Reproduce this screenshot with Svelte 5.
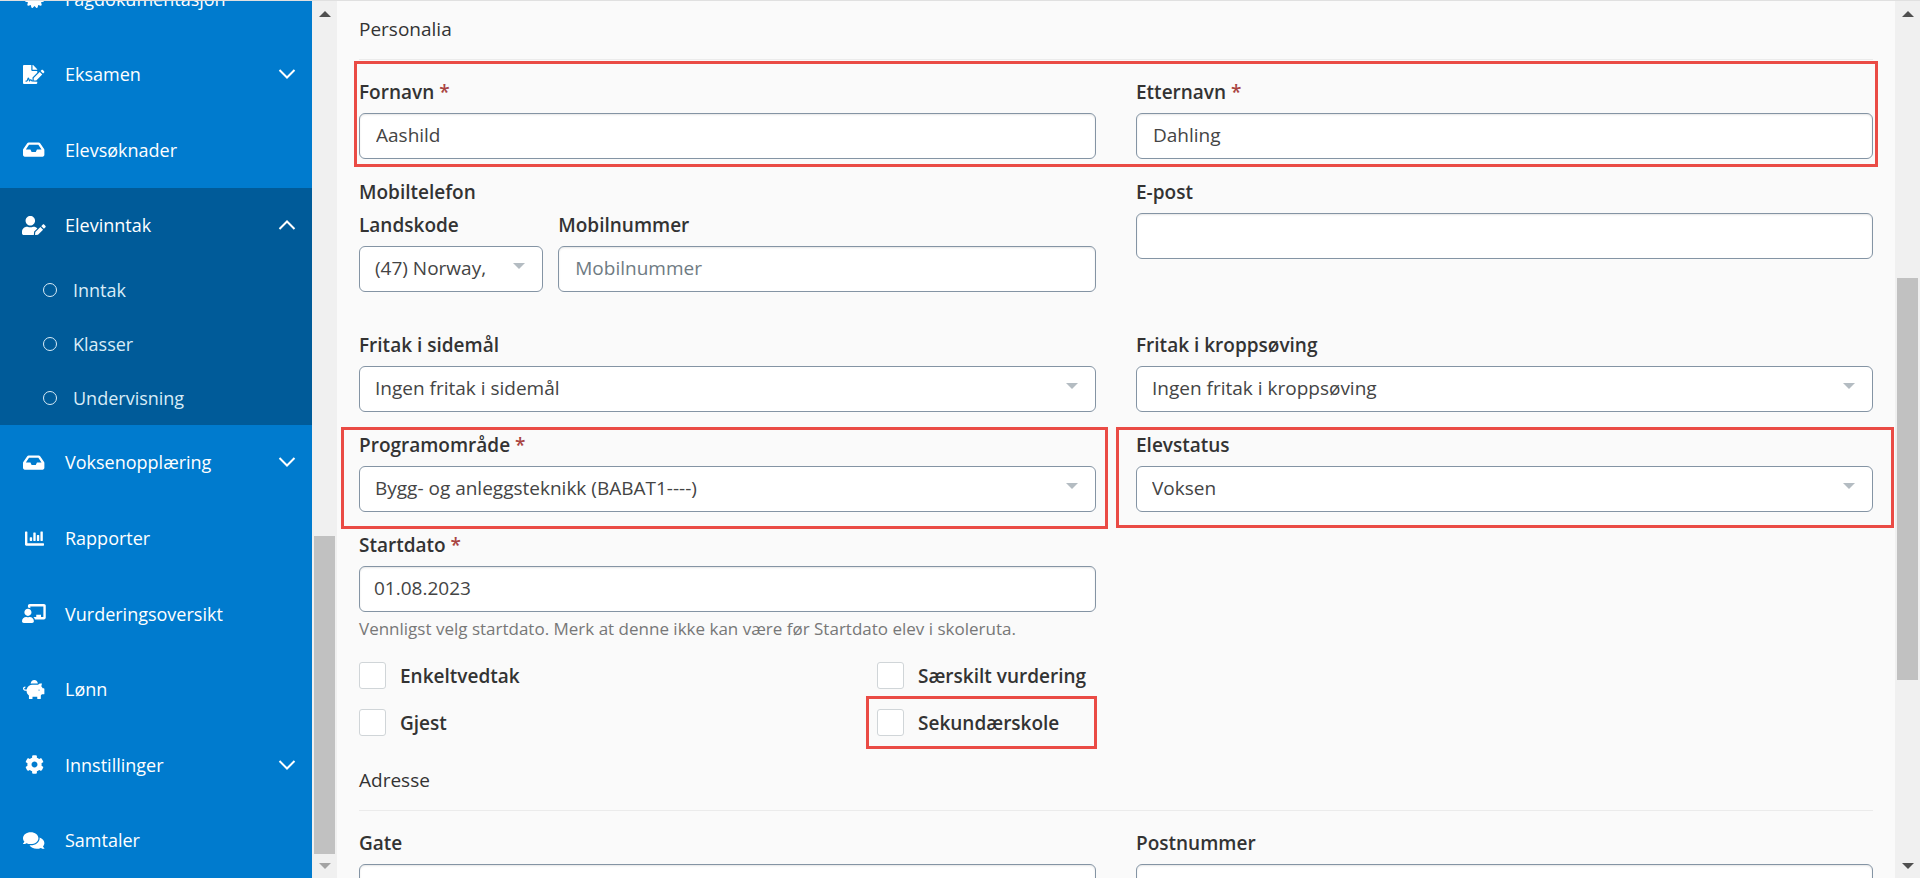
<script lang="ts">
	type NavItem = {
		label: string;
		icon: string;
		expandable?: boolean;
		children?: string[];
	};

	const ICONS: Record<string, { width: number; d: string }> = {
		certificate: {
			width: 512,
			d: 'M458.622 255.92l45.985-45.005c13.708-12.977 7.316-36.039-10.664-40.339l-62.65-15.99 17.661-62.015c4.991-17.838-11.829-34.663-29.661-29.671l-61.994 17.667-15.984-62.671C337.085.197 313.765-6.276 300.99 7.228L256 53.57 211.011 7.229c-12.63-13.351-36.047-7.234-40.325 10.668l-15.984 62.671-61.995-17.667C74.87 57.907 58.056 74.738 63.046 92.572l17.661 62.015-62.65 15.99C.069 174.878-6.31 197.944 7.392 210.915l45.985 45.005-45.985 45.004c-13.708 12.977-7.316 36.039 10.664 40.339l62.65 15.99-17.661 62.015c-4.991 17.838 11.829 34.663 29.661 29.671l61.994-17.667 15.984 62.671c4.439 18.575 27.696 24.018 40.325 10.668L256 458.61l44.989 46.001c12.5 13.488 35.987 7.486 40.325-10.668l15.984-62.671 61.994 17.667c17.836 4.994 34.651-11.837 29.661-29.671l-17.661-62.015 62.65-15.99c17.987-4.302 24.366-27.367 10.664-40.339l-45.984-45.004z'
		},
		signature: {
			width: 576,
			d: 'M218.17 424.14c-2.95-5.92-8.09-6.52-10.17-6.52s-7.22.59-10.02 6.19l-7.67 15.34c-6.37 12.78-25.03 11.37-29.48-2.09L144 386.59l-10.61 31.88c-5.89 17.66-22.38 29.53-41 29.53H80c-8.84 0-16-7.16-16-16s7.16-16 16-16h12.39c4.83 0 9.11-3.08 10.64-7.66l18.19-54.64c3.3-9.81 12.44-16.41 22.78-16.41s19.48 6.59 22.77 16.41l13.88 41.64c19.75-16.19 54.06-9.7 66 14.16 1.89 3.78 5.49 5.95 9.36 6.26v-82.12l128-127.09V160H248c-13.2 0-24-10.8-24-24V0H24C10.7 0 0 10.7 0 24v464c0 13.3 10.7 24 24 24h336c13.3 0 24-10.7 24-24v-40l-128-.11c-16.12-.31-30.58-9.28-37.83-23.75zM384 121.9c0-6.3-2.5-12.4-7-16.9L279.1 7c-4.5-4.5-10.6-7-17-7H256v128h128v-6.1zm-96 225.06V416h68.99l161.68-162.78-67.88-67.88L288 346.96zm280.54-179.63l-31.87-31.87c-9.94-9.94-26.07-9.94-36.01 0l-27.25 27.25 67.88 67.88 27.25-27.25c9.95-9.94 9.95-26.07 0-36.01z'
		},
		inbox: {
			width: 576,
			d: 'M567.938 243.908L462.25 85.374A48.003 48.003 0 0 0 422.311 64H153.689a48 48 0 0 0-39.938 21.374L8.062 243.908A47.994 47.994 0 0 0 0 270.533V400c0 26.51 21.49 48 48 48h480c26.51 0 48-21.49 48-48V270.533a47.994 47.994 0 0 0-8.062-26.625zM162.252 128h251.497l85.333 128H376l-32 64H232l-32-64H76.918l85.334-128z'
		},
		userEdit: {
			width: 640,
			d: 'M224 256c70.7 0 128-57.3 128-128S294.7 0 224 0 96 57.3 96 128s57.3 128 128 128zm89.6 32h-16.7c-22.2 10.2-46.9 16-72.9 16s-50.6-5.8-72.9-16h-16.7C60.2 288 0 348.2 0 422.4V464c0 26.5 21.5 48 48 48h274.9c-2.4-6.8-3.4-14-2.6-21.3l6.8-60.9 1.2-11.1 7.9-7.9 77.3-77.3c-24.5-27.7-60-45.5-99.9-45.5zm45.3 145.3l-6.8 61c-1.1 10.2 7.5 18.8 17.6 17.6l60.9-6.8 137.9-137.9-71.7-71.7-137.9 137.8zM633 268.9L595.1 231c-9.3-9.3-24.5-9.3-33.8 0l-37.8 37.8-4.1 4.1 71.8 71.7 41.8-41.8c9.3-9.4 9.3-24.5 0-33.9z'
		},
		chart: {
			width: 512,
			d: 'M332.8 320h38.4c6.4 0 12.8-6.4 12.8-12.8V172.8c0-6.4-6.4-12.8-12.8-12.8h-38.4c-6.4 0-12.8 6.4-12.8 12.8v134.4c0 6.4 6.4 12.8 12.8 12.8zm96 0h38.4c6.4 0 12.8-6.4 12.8-12.8V76.8c0-6.4-6.4-12.8-12.8-12.8h-38.4c-6.4 0-12.8 6.4-12.8 12.8v230.4c0 6.4 6.4 12.8 12.8 12.8zm-288 0h38.4c6.4 0 12.8-6.4 12.8-12.8v-70.4c0-6.4-6.4-12.8-12.8-12.8h-38.4c-6.4 0-12.8 6.4-12.8 12.8v70.4c0 6.4 6.4 12.8 12.8 12.8zm96 0h38.4c6.4 0 12.8-6.4 12.8-12.8V108.8c0-6.4-6.4-12.8-12.8-12.8h-38.4c-6.4 0-12.8 6.4-12.8 12.8v198.4c0 6.4 6.4 12.8 12.8 12.8zM496 384H64V80c0-8.84-7.16-16-16-16H16C7.16 64 0 71.16 0 80v336c0 17.67 14.33 32 32 32h464c8.84 0 16-7.16 16-16v-32c0-8.84-7.16-16-16-16z'
		},
		teacher: {
			width: 640,
			d: 'M208 352c-2.39 0-4.78.35-7.06 1.09C187.98 357.3 174.35 360 160 360c-14.35 0-27.98-2.7-40.95-6.91-2.28-.74-4.66-1.09-7.05-1.09C49.94 352-.33 402.48 0 464.62.14 490.88 21.73 512 48 512h224c26.27 0 47.86-21.12 48-47.38.33-62.14-49.94-112.62-112-112.62zm-48-32c53.02 0 96-42.98 96-96s-42.98-96-96-96-96 42.98-96 96 42.98 96 96 96zM592 0H208c-26.47 0-48 22.25-48 49.59V96c23.42 0 45.1 6.78 64 17.8V64h352v288h-64v-64H384v64h-76.24c19.1 16.69 33.12 38.73 39.69 64H592c26.47 0 48-22.25 48-49.59V49.59C640 22.25 618.47 0 592 0z'
		},
		piggy: {
			width: 576,
			d: 'M560 224h-29.5c-8.8-20-21.6-37.7-37.4-52.5L512 96h-32c-29.4 0-55.4 13.5-73 34.3-7.6-1.1-15.1-2.3-23-2.3H256c-77.4 0-141.9 55-156.8 128H56c-14.8 0-26.5-13.5-23.5-28.8C34.7 215.8 45.4 208 57 208h1c3.3 0 6-2.7 6-6v-20c0-3.3-2.7-6-6-6-28.5 0-53.9 20.4-57.5 48.6C-3.9 258.8 22.7 288 56 288h40c0 52.2 25.4 98.1 64 127.3V496c0 8.8 7.2 16 16 16h64c8.8 0 16-7.2 16-16v-48h128v48c0 8.8 7.2 16 16 16h64c8.8 0 16-7.2 16-16v-80.7c11.8-8.9 22.3-19.4 31.3-31.3H560c8.8 0 16-7.2 16-16V240c0-8.8-7.2-16-16-16zm-128 64c-8.8 0-16-7.2-16-16s7.2-16 16-16 16 7.2 16 16-7.2 16-16 16zM256 96h128c5.4 0 10.7.4 15.9.8 0-.3.1-.5.1-.8 0-53-43-96-96-96s-96 43-96 96c0 2.1.5 4.1.6 6.2 15.2-3.9 31-6.2 47.4-6.2z'
		},
		cog: {
			width: 512,
			d: 'M487.4 315.7l-42.6-24.6c4.3-23.2 4.3-47 0-70.2l42.6-24.6c4.9-2.8 7.1-8.6 5.5-14-11.1-35.6-30-67.8-54.7-94.6-3.8-4.1-10-5.1-14.8-2.3L380.8 110c-17.9-15.4-38.5-27.3-60.8-35.1V25.8c0-5.6-3.9-10.5-9.4-11.7-36.7-8.2-74.3-7.8-109.2 0-5.5 1.2-9.4 6.1-9.4 11.7V75c-22.2 7.9-42.8 19.8-60.8 35.1L88.7 85.5c-4.9-2.8-11-1.9-14.8 2.3-24.7 26.7-43.6 58.9-54.7 94.6-1.7 5.4.6 11.2 5.5 14L67.3 221c-4.3 23.2-4.3 47 0 70.2l-42.6 24.6c-4.9 2.8-7.1 8.6-5.5 14 11.1 35.6 30 67.8 54.7 94.6 3.8 4.1 10 5.1 14.8 2.3l42.6-24.6c17.9 15.4 38.5 27.3 60.8 35.1v49.2c0 5.6 3.9 10.5 9.4 11.7 36.7 8.2 74.3 7.8 109.2 0 5.5-1.2 9.4-6.1 9.4-11.7v-49.2c22.2-7.9 42.8-19.8 60.8-35.1l42.6 24.6c4.9 2.8 11 1.9 14.8-2.3 24.7-26.7 43.6-58.9 54.7-94.6 1.5-5.5-.7-11.3-5.6-14.1zM256 336c-44.1 0-80-35.9-80-80s35.9-80 80-80 80 35.9 80 80-35.9 80-80 80z'
		},
		comments: {
			width: 576,
			d: 'M416 192c0-88.4-93.1-160-208-160S0 103.6 0 192c0 34.3 14.1 65.9 38 92-13.4 30.2-35.5 54.2-35.8 54.5-2.2 2.3-2.8 5.7-1.5 8.7S4.8 352 8 352c36.6 0 66.9-12.3 88.7-25 32.2 15.7 70.3 25 111.3 25 114.9 0 208-71.6 208-160zm122 220c23.9-26 38-57.7 38-92 0-66.9-53.5-124.2-129.3-148.1.9 6.6 1.3 13.3 1.3 20.1 0 105.9-107.7 192-240 192-10.8 0-21.3-.8-31.7-1.9C207.8 439.6 281.8 480 368 480c41 0 79.1-9.2 111.3-25 21.8 12.7 52.1 25 88.7 25 3.2 0 6.1-1.9 7.3-4.8 1.3-2.9.7-6.3-1.5-8.7-.3-.2-22.4-24.2-35.8-54.5z'
		}
	};

	const NAV: NavItem[] = [
		{ label: 'Fagdokumentasjon', icon: 'certificate' },
		{ label: 'Eksamen', icon: 'signature', expandable: true },
		{ label: 'Elevsøknader', icon: 'inbox' },
		{
			label: 'Elevinntak',
			icon: 'userEdit',
			expandable: true,
			children: ['Inntak', 'Klasser', 'Undervisning']
		},
		{ label: 'Voksenopplæring', icon: 'inbox', expandable: true },
		{ label: 'Rapporter', icon: 'chart' },
		{ label: 'Vurderingsoversikt', icon: 'teacher' },
		{ label: 'Lønn', icon: 'piggy' },
		{ label: 'Innstillinger', icon: 'cog', expandable: true },
		{ label: 'Samtaler', icon: 'comments' }
	];

	let fornavn = $state('Aashild');
	let etternavn = $state('Dahling');
	let startdato = $state('01.08.2023');
</script>

{#snippet row(item: NavItem)}
	<span class="nav-icon">
		<svg viewBox="0 0 {ICONS[item.icon].width} 512" aria-hidden="true">
			<path fill="currentColor" d={ICONS[item.icon].d} />
		</svg>
	</span>
	<span class="nav-label">{item.label}</span>
	{#if item.expandable}
		<svg class="chevron" class:open={item.children} viewBox="0 0 18 12" aria-hidden="true">
			<path d="M1.5 2 9 9.500 16.500 2" fill="none" stroke="currentColor" stroke-width="2" />
		</svg>
	{/if}
{/snippet}

{#snippet scrollbar(before: number, thumb: number, after: number)}
	<div class="scrollbar" aria-hidden="true">
		<span class="arrow up"></span>
		<div class="track">
			<div style="flex-grow: {before}"></div>
			<div class="thumb" style="flex-grow: {thumb}"></div>
			<div style="flex-grow: {after}"></div>
		</div>
		<span class="arrow down" class:disabled={after === 0}></span>
	</div>
{/snippet}

{#snippet star()}<span class="required">*</span>{/snippet}

<div class="page">
	<nav class="sidebar" aria-label="Hovedmeny">
		<ul class="nav-list">
			{#each NAV as item (item.label)}
				{#if item.children}
					<li class="nav-group">
						<button type="button" class="nav-row" aria-expanded="true">{@render row(item)}</button>
						<ul>
							{#each item.children as child}
								<li><a class="sub-row" href="#{child}"><span class="ring"></span>{child}</a></li>
							{/each}
						</ul>
					</li>
				{:else}
					<li class="nav-item">
						{#if item.expandable}
							<button type="button" class="nav-row" aria-expanded="false">{@render row(item)}</button>
						{:else}
							<a class="nav-row" href="#{item.label}">{@render row(item)}</a>
						{/if}
					</li>
				{/if}
			{/each}
		</ul>
	</nav>
	{@render scrollbar(510, 319, 0)}

	<main class="content">
		<form>
			<h2>Personalia</h2>

			<div class="grid">
				<div class="field">
					<label for="fornavn">Fornavn {@render star()}</label>
					<input id="fornavn" class="control" type="text" bind:value={fornavn} />
				</div>
				<div class="field">
					<label for="etternavn">Etternavn {@render star()}</label>
					<input id="etternavn" class="control" type="text" bind:value={etternavn} />
				</div>
				<span class="mark mark-names"></span>
			</div>

			<div class="grid contact">
				<fieldset>
					<legend>Mobiltelefon</legend>
					<div class="phone">
						<div class="field code">
							<label for="landskode">Landskode</label>
							<div class="select">
								<select id="landskode" class="control"><option>(47) Norway,</option></select>
							</div>
						</div>
						<div class="field number">
							<label for="mobilnummer">Mobilnummer</label>
							<input id="mobilnummer" class="control" type="tel" placeholder="Mobilnummer" />
						</div>
					</div>
				</fieldset>
				<div class="field">
					<label for="epost">E-post</label>
					<input id="epost" class="control" type="email" />
				</div>
			</div>

			<div class="grid">
				<div class="field">
					<label for="sidemal">Fritak i sidemål</label>
					<div class="select">
						<select id="sidemal" class="control"><option>Ingen fritak i sidemål</option></select>
					</div>
				</div>
				<div class="field">
					<label for="kroppsoving">Fritak i kroppsøving</label>
					<div class="select">
						<select id="kroppsoving" class="control"><option>Ingen fritak i kroppsøving</option></select>
					</div>
				</div>
			</div>

			<div class="grid">
				<div class="field">
					<label for="program">Programområde {@render star()}</label>
					<div class="select">
						<select id="program" class="control"><option>Bygg- og anleggsteknikk (BABAT1----)</option></select>
					</div>
					<span class="mark mark-program"></span>
				</div>
				<div class="field">
					<label for="elevstatus">Elevstatus</label>
					<div class="select">
						<select id="elevstatus" class="control"><option>Voksen</option></select>
					</div>
					<span class="mark mark-status"></span>
				</div>
			</div>

			<div class="grid">
				<div class="field">
					<label for="startdato">Startdato {@render star()}</label>
					<input id="startdato" class="control date" type="text" bind:value={startdato} aria-describedby="startdato-help" />
					<p id="startdato-help" class="help">Vennligst velg startdato. Merk at denne ikke kan være før Startdato elev i skoleruta.</p>
				</div>
			</div>

			<div class="checks">
				<label class="check"><input type="checkbox" />Enkeltvedtak</label>
				<label class="check"><input type="checkbox" />Særskilt vurdering</label>
				<label class="check second-row"><input type="checkbox" />Gjest</label>
				<label class="check"><input type="checkbox" />Sekundærskole<span class="mark mark-check"></span></label>
			</div>

			<h2>Adresse</h2>

			<div class="grid">
				<div class="field">
					<label for="gate">Gate</label>
					<input id="gate" class="control" type="text" />
				</div>
				<div class="field">
					<label for="postnummer">Postnummer</label>
					<input id="postnummer" class="control" type="text" />
				</div>
			</div>
		</form>
	</main>
	{@render scrollbar(252, 403, 174)}
</div>

<style>
	:global(body) {
		margin: 0;
		background: #fafafa;
	}

	.page {
		display: flex;
		height: 100vh;
		box-sizing: border-box;
		overflow: hidden;
		border-top: 1px solid #e0e0e0;
		font-family: 'Open Sans', 'Noto Sans', sans-serif;
		font-size: 19px;
		line-height: 26px;
		color: #333;
	}

	/* Sidebar */
	.sidebar {
		display: flex;
		flex: 0 0 312px;
		overflow: hidden;
		background: #007bce;
	}

	ul {
		margin: 0;
		padding: 0;
		list-style: none;
	}

	/* The menu is scrolled about half a row down */
	.nav-list {
		display: flex;
		flex: 1;
		flex-direction: column;
		margin-top: -40px;
	}

	.nav-item {
		display: flex;
		flex: 1 0 75px;
	}

	.nav-group {
		flex: none;
		background: #005b99;
	}

	.nav-row {
		display: flex;
		align-items: center;
		gap: 19px;
		width: 100%;
		min-height: 75px;
		box-sizing: border-box;
		padding: 0 16px 0 22px;
		border: 0;
		background: none;
		color: #fff;
		font: inherit;
		font-size: 18px;
		text-align: left;
		text-decoration: none;
		cursor: pointer;
	}

	.nav-icon {
		display: flex;
		justify-content: center;
		width: 24px;
	}

	.nav-icon svg {
		height: 19px;
	}

	.nav-label {
		flex: 1;
	}

	.chevron {
		width: 18px;
		height: 12px;
	}

	.chevron.open {
		transform: rotate(180deg);
	}

	.sub-row {
		display: flex;
		align-items: center;
		gap: 16px;
		height: 54px;
		padding-left: 43px;
		color: #d9ecf7;
		font-size: 18px;
		text-decoration: none;
	}

	.ring {
		width: 12px;
		height: 12px;
		border: 1px solid #d9ecf7;
		border-radius: 50%;
	}

	/* Scrollbars */
	.scrollbar {
		display: flex;
		flex: 0 0 25px;
		flex-direction: column;
		align-items: center;
		background: #f0f0f0;
	}

	.arrow {
		display: flex;
		align-items: center;
		justify-content: center;
		height: 24px;
	}

	.arrow.up {
		height: 26px;
	}

	.arrow::after {
		content: '';
		border: 6px solid transparent;
	}

	.arrow.up::after {
		border-top: 0;
		border-bottom-color: #505050;
	}

	.arrow.down::after {
		border-bottom: 0;
		border-top-color: #505050;
	}

	.arrow.disabled::after {
		border-top-color: #a3a3a3;
	}

	.track {
		display: flex;
		flex: 1;
		flex-direction: column;
		width: 21px;
	}

	.thumb {
		background: #c1c1c1;
	}

	/* Form */
	.content {
		flex: 1;
		min-width: 0;
		overflow: hidden;
		padding: 0 22px;
	}

	h2 {
		margin: 0 0 19px;
		padding: 15px 0 17px;
		border-bottom: 1px solid #ebebeb;
		font-size: 19px;
		font-weight: 400;
		line-height: 26px;
	}

	.grid {
		position: relative;
		display: grid;
		grid-template-columns: 1fr 1fr;
		column-gap: 40px;
		margin-bottom: 20px;
	}

	.contact {
		margin-bottom: 40px;
	}

	.field {
		position: relative;
		min-width: 0;
	}

	.field label,
	legend {
		display: block;
		padding: 0 0 8px;
		font-weight: 600;
		line-height: 26px;
	}

	.required {
		color: #a94442;
	}

	.control {
		display: block;
		width: 100%;
		height: 46px;
		box-sizing: border-box;
		margin: 0;
		padding: 0 16px 2px;
		border: 1px solid #8494a4;
		border-radius: 6px;
		background: #fff;
		color: #444;
		font: inherit;
		appearance: none;
	}

	input.control {
		box-shadow: inset 0 1px 2px rgba(0, 0, 0, 0.1);
	}

	.control.date {
		padding-left: 14px;
	}

	.control::placeholder {
		color: #6f7b83;
		opacity: 1;
	}

	.select {
		position: relative;
	}

	.select .control {
		padding: 0 15px 2px;
	}

	.select::after {
		content: '';
		position: absolute;
		top: 17px;
		right: 18px;
		border: 6px solid transparent;
		border-top-color: #b4bcc2;
		border-bottom: 0;
		pointer-events: none;
	}

	fieldset {
		min-width: 0;
		margin: 0;
		padding: 0;
		border: 0;
	}

	legend {
		padding-bottom: 7px;
	}

	.phone {
		display: flex;
		gap: 15px;
	}

	.code {
		flex: 0 0 25%;
	}

	.number {
		flex: 1;
	}

	.help {
		margin: 4px 0 0;
		color: #777;
		font-size: 17px;
		line-height: 26px;
	}

	.checks {
		display: grid;
		grid-template-columns: repeat(3, 1fr);
		gap: 20px 40px;
		margin-bottom: 16px;
	}

	.check {
		position: relative;
		display: flex;
		align-items: center;
		gap: 14px;
		font-weight: 600;
	}

	.second-row {
		grid-column: 1;
	}

	.check input {
		width: 27px;
		height: 27px;
		margin: 0;
		border: 1px solid #d0d5d8;
		border-radius: 3px;
		background: #fff;
		appearance: none;
	}

	/* Red frames laid over the fields to be filled in */
	.mark {
		position: absolute;
		border: 3px solid #ea4b45;
		pointer-events: none;
	}

	.mark-names {
		inset: -18px -5px -8px;
	}

	.mark-program {
		inset: -5px -12px -17px -18px;
	}

	.mark-status {
		inset: -5px -21px -16px -20px;
	}

	.mark-check {
		inset: -13px auto -13px -11px;
		width: 225px;
	}
</style>
